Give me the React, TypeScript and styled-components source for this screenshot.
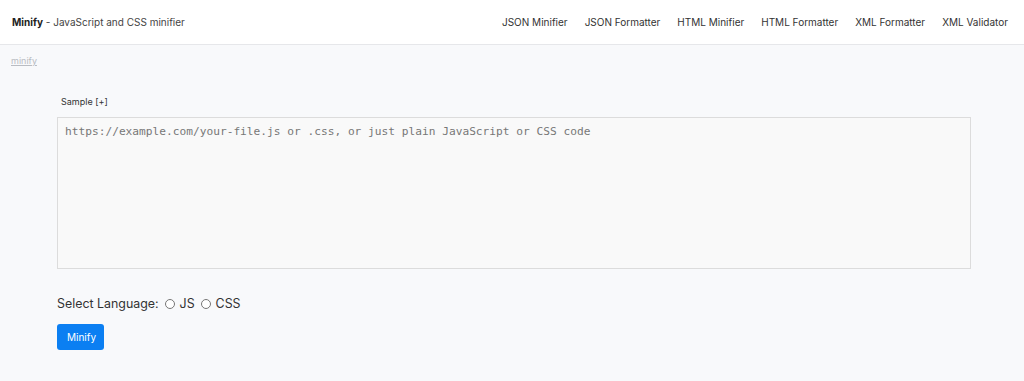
import React, { useState } from 'react';
import styled, { createGlobalStyle } from 'styled-components';

const GlobalStyle = createGlobalStyle`
  html, body {
    margin: 0;
    padding: 0;
    background: #f8f9fb;
    font-family: Inter, "Liberation Sans", Arial, sans-serif;
  }
`

const StyledHeader = styled.header`
  display: flex;
  align-items: center;
  justify-content: space-between;
  height: 44px;
  padding: 0 16px 0 12px;
  background: #ffffff;
  border-bottom: 1px solid #e6e7ea;
  font-size: 10px;
  color: #333;
`
const Brand = styled.div`
  color: #444;
  b {
    color: #222;
    font-weight: 700;
  }
`
const Nav = styled.nav`
  display: flex;
  gap: 17px;
`
const NavLink = styled.a`
  color: #333;
  text-decoration: none;
`
const Crumb = styled.a`
  display: inline-block;
  margin: 10px 0 0 11px;
  font-size: 9px;
  color: #b9bcc2;
  text-decoration: underline;
`
const Main = styled.main`
  display: flex;
  flex-direction: column;
  align-items: flex-start;
  padding: 0 53px 0 57px;
`
const SampleLink = styled.div`
  margin: 28px 0 0 4px;
  font-size: 9px;
  color: #333;
`
const CodeArea = styled.textarea`
  box-sizing: border-box;
  width: 914px;
  height: 152px;
  margin-top: 10px;
  padding: 6px 7px;
  background: #f9f9f9;
  border: 1px solid #dcdcdc;
  resize: none;
  font-family: "DejaVu Sans Mono", "Liberation Mono", monospace;
  font-size: 11.2px;
  line-height: 16px;
  color: #333;
  &::placeholder {
    color: #777;
  }
`
const LangRow = styled.div`
  display: flex;
  align-items: center;
  gap: 6px;
  margin-top: 27px;
  font-size: 12.4px;
  color: #333;
`
const Radio = styled.label`
  display: flex;
  align-items: center;
  gap: 5px;
  input {
    margin: 0;
    width: 10px;
    height: 10px;
  }
`
const MinifyButton = styled.button`
  margin-top: 13px;
  padding: 0 10px;
  width: 47px;
  height: 26px;
  background: #0b7ff2;
  color: #fff;
  border: none;
  border-radius: 3px;
  font-family: inherit;
  font-size: 10px;
`

const links = ['JSON Minifier', 'JSON Formatter', 'HTML Minifier', 'HTML Formatter', 'XML Formatter', 'XML Validator']

export default function App() {
  const [code, setCode] = useState('')
  const [lang, setLang] = useState('')

  return <>
    <GlobalStyle/>
    <StyledHeader>
      <Brand><b>Minify</b> - JavaScript and CSS minifier</Brand>
      <Nav>
        {links.map(l => <NavLink key={l} href="#">{l}</NavLink>)}
      </Nav>
    </StyledHeader>
    <Crumb href="#">minify</Crumb>
    <Main>
      <SampleLink>Sample [+]</SampleLink>
      <CodeArea
        value={code}
        onChange={(e) => setCode(e.currentTarget.value)}
        placeholder="https://example.com/your-file.js or .css, or just plain JavaScript or CSS code"/>
      <LangRow>
        Select Language:
        <Radio><input type="radio" name="lang" checked={lang === 'js'} onChange={() => setLang('js')}/>JS</Radio>
        <Radio><input type="radio" name="lang" checked={lang === 'css'} onChange={() => setLang('css')}/>CSS</Radio>
      </LangRow>
      <MinifyButton>Minify</MinifyButton>
    </Main>
  </>
}
